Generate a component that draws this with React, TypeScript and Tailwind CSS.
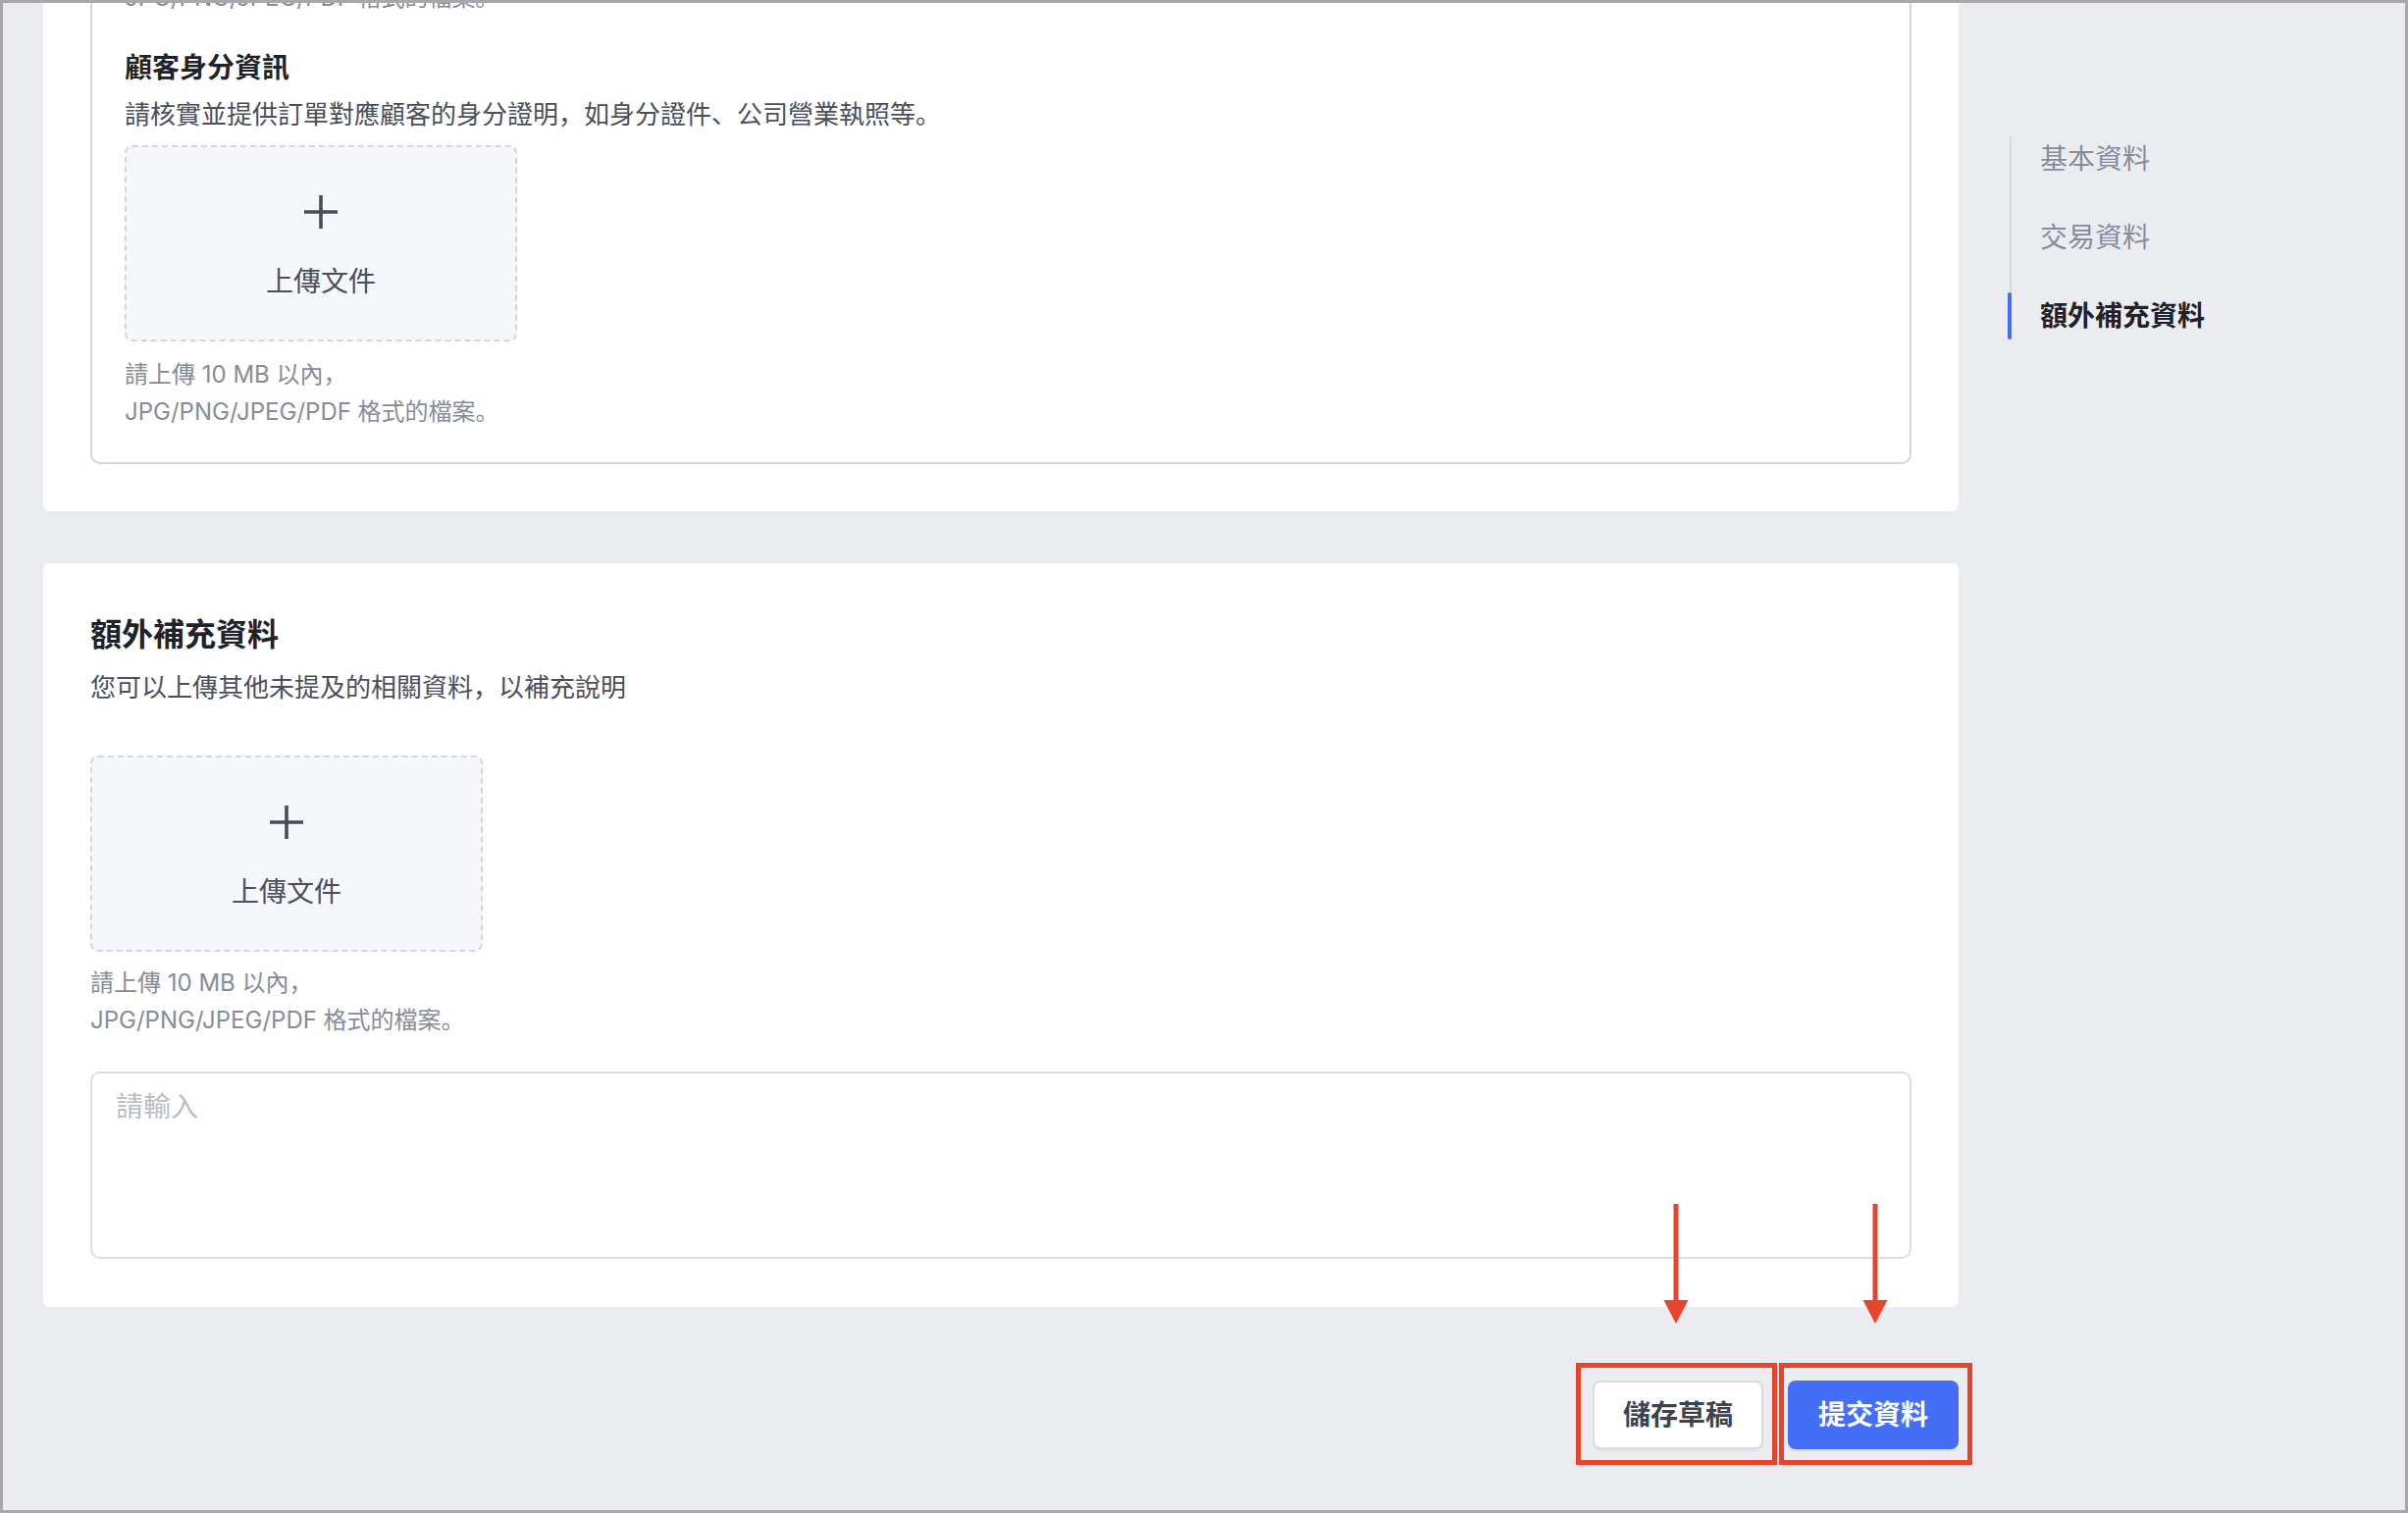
import React from "react";

function PlusIcon() {
  return (
    <svg width="36" height="36" viewBox="0 0 36 36" fill="none" aria-hidden="true">
      <path d="M18 1v34M1 18h34" stroke="#474c58" strokeWidth="3.6" />
    </svg>
  );
}

function UploadBox() {
  return (
    <button
      type="button"
      className="w-[400px] h-[200px] rounded-[8px] border-2 border-dashed border-[#d3d6e0] bg-[#f6f7fa] flex flex-col items-center pt-[48px]"
    >
      <PlusIcon />
      <span className="mt-[33px] text-[28px] leading-[40px] text-[#4a4f5b]">上傳文件</span>
    </button>
  );
}

function FileHint({ className = "" }: { className?: string }) {
  return (
    <div className={"text-[24px] leading-[38px] text-[#868c99] " + className}>
      <p>請上傳 10 MB 以內，</p>
      <p>JPG/PNG/JPEG/PDF 格式的檔案。</p>
    </div>
  );
}

function Arrow({ className }: { className: string }) {
  return (
    <svg className={className} width="26" height="122" viewBox="0 0 26 122" aria-hidden="true">
      <path d="M13 0v100" stroke="#e8432b" strokeWidth="5" />
      <polygon points="0.5,98 25.5,98 13,122" fill="#e8432b" />
    </svg>
  );
}

const sections = [
  { label: "基本資料", active: false },
  { label: "交易資料", active: false },
  { label: "額外補充資料", active: true },
];

export default function App() {
  return (
    <div className="relative w-[2454px] h-[1542px] overflow-hidden border-[3px] border-[#a8a8ab] bg-[#ebecf0] flex items-start font-['Inter','Noto_Sans_CJK_SC',sans-serif]">
      {/* form column */}
      <div className="ml-[41px] mt-[-144px] w-[1952px] shrink-0">
        <section className="bg-white rounded-[6px] px-[48px] pt-[48px] pb-[48px]">
          <div className="rounded-[10px] border-2 border-[#d3d6dd] px-[33px] pt-[32px] pb-[32px]">
            <FileHint />
            <h3 className="mt-[30px] text-[28px] leading-[44px] font-bold text-[#1f2329]">顧客身分資訊</h3>
            <p className="mt-[6px] text-[26px] leading-[40px] text-[#4a4f5b]">
              請核實並提供訂單對應顧客的身分證明，如身分證件、公司營業執照等。
            </p>
            <div className="mt-[11px]">
              <UploadBox />
            </div>
            <FileHint className="mt-[15px]" />
          </div>
        </section>

        <section className="mt-[53px] bg-white rounded-[6px] px-[48px] pt-[48px] pb-[49px]">
          <h2 className="text-[32px] leading-[50px] font-bold text-[#1f2329]">額外補充資料</h2>
          <p className="mt-[9px] text-[26px] leading-[40px] text-[#4a4f5b]">
            您可以上傳其他未提及的相關資料，以補充說明
          </p>
          <div className="mt-[49px]">
            <UploadBox />
          </div>
          <FileHint className="mt-[13px]" />
          <textarea
            placeholder="請輸入"
            className="mt-[33px] block w-full h-[191px] resize-none rounded-[10px] border-2 border-[#dcdee6] bg-white px-[24px] py-[14px] text-[28px] leading-[40px] text-[#1f2329] placeholder:text-[#b8bcc6] outline-none"
          />
        </section>

        <div className="mt-[75px] flex justify-end gap-[25px]">
          <button
            type="button"
            className="w-[174px] h-[70px] rounded-[8px] border-2 border-[#d9dbe3] bg-white text-[28px] font-bold text-[#3f434e] shadow-[0_2px_0_rgba(0,0,0,0.04)]"
          >
            儲存草稿
          </button>
          <button
            type="button"
            className="w-[174px] h-[70px] rounded-[8px] bg-[#446ef5] text-[28px] font-bold text-white shadow-[0_2px_0_rgba(0,0,0,0.05)]"
          >
            提交資料
          </button>
        </div>
      </div>

      {/* section anchor nav */}
      <nav className="ml-[52px] mt-[135px] border-l-2 border-[#d8dae3] flex flex-col gap-[32px]">
        {sections.map((s) => (
          <div
            key={s.label}
            className={
              s.active
                ? "relative h-[48px] flex items-center pl-[29px] text-[28px] font-bold text-[#1f2329]"
                : "relative h-[48px] flex items-center pl-[29px] text-[28px] text-[#868c9a]"
            }
          >
            {s.active && (
              <span className="absolute left-[-4px] top-0 w-[4px] h-[48px] rounded-full bg-[#446ef5]" />
            )}
            {s.label}
          </div>
        ))}
      </nav>

      {/* callouts over the action buttons */}
      <Arrow className="absolute left-[1692px] top-[1224px]" />
      <Arrow className="absolute left-[1895px] top-[1224px]" />
      <div className="absolute left-[1603px] top-[1386px] w-[205px] h-[104px] border-[5px] border-[#e8432b]" />
      <div className="absolute left-[1810px] top-[1386px] w-[197px] h-[104px] border-[5px] border-[#e8432b]" />
    </div>
  );
}
